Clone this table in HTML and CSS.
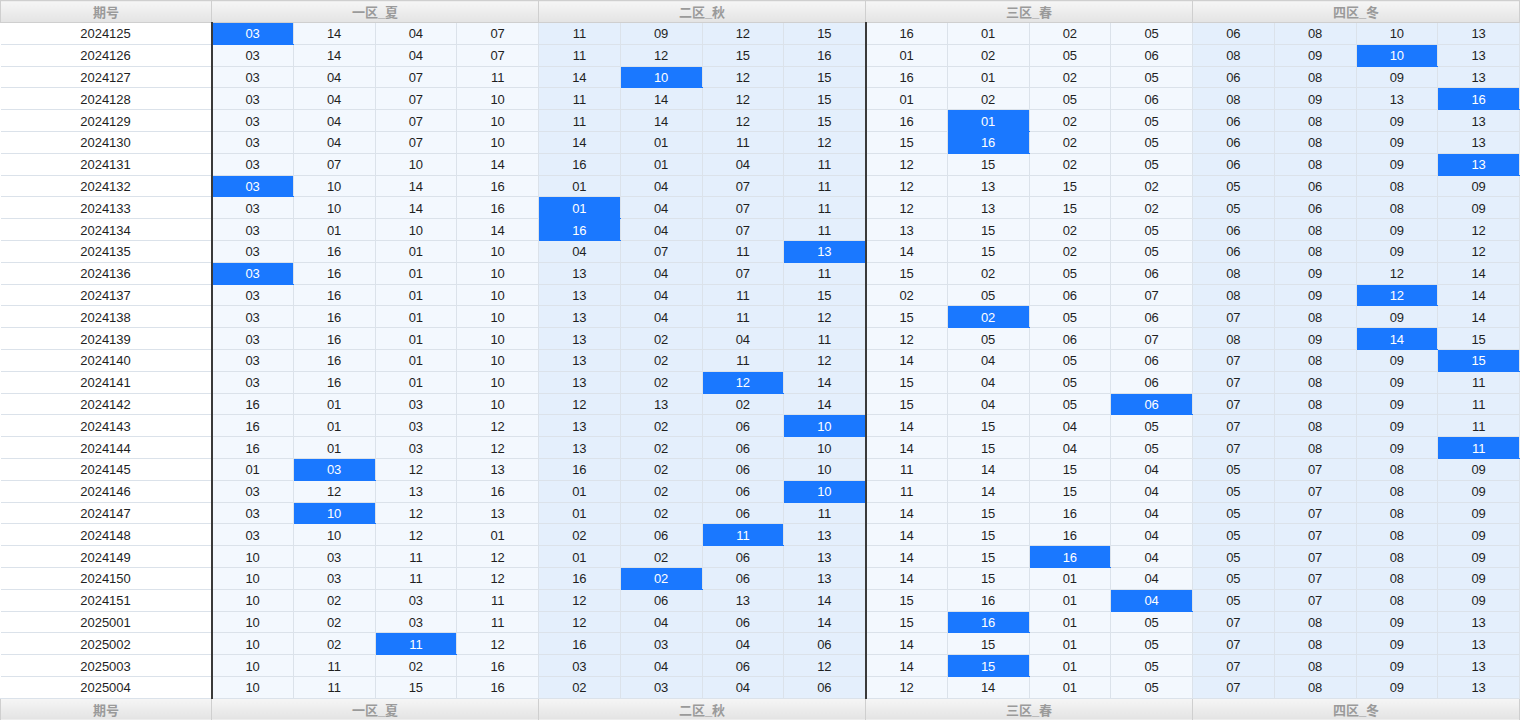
FILE: index.html
```html
<!DOCTYPE html>
<html lang="zh">
<head>
<meta charset="utf-8">
<title>分区走势</title>
<link rel="stylesheet" href="styles.css">
</head>
<body>
<table class="grid">
<colgroup class="cp"><col class="c-period"></colgroup>
<colgroup class="za"><col><col><col><col></colgroup>
<colgroup class="zb"><col><col><col><col></colgroup>
<colgroup class="za"><col><col><col><col></colgroup>
<colgroup class="zb"><col><col><col><col></colgroup>
<thead>
<tr><th>期号</th><th colspan="4">一区_夏</th><th colspan="4">二区_秋</th><th colspan="4">三区_春</th><th colspan="4">四区_冬</th></tr>
</thead>
<tbody>
<tr><td>2024125</td><td class="h">03</td><td>14</td><td>04</td><td>07</td><td>11</td><td>09</td><td>12</td><td>15</td><td>16</td><td>01</td><td>02</td><td>05</td><td>06</td><td>08</td><td>10</td><td>13</td></tr>
<tr><td>2024126</td><td>03</td><td>14</td><td>04</td><td>07</td><td>11</td><td>12</td><td>15</td><td>16</td><td>01</td><td>02</td><td>05</td><td>06</td><td>08</td><td>09</td><td class="h">10</td><td>13</td></tr>
<tr><td>2024127</td><td>03</td><td>04</td><td>07</td><td>11</td><td>14</td><td class="h">10</td><td>12</td><td>15</td><td>16</td><td>01</td><td>02</td><td>05</td><td>06</td><td>08</td><td>09</td><td>13</td></tr>
<tr><td>2024128</td><td>03</td><td>04</td><td>07</td><td>10</td><td>11</td><td>14</td><td>12</td><td>15</td><td>01</td><td>02</td><td>05</td><td>06</td><td>08</td><td>09</td><td>13</td><td class="h">16</td></tr>
<tr><td>2024129</td><td>03</td><td>04</td><td>07</td><td>10</td><td>11</td><td>14</td><td>12</td><td>15</td><td>16</td><td class="h">01</td><td>02</td><td>05</td><td>06</td><td>08</td><td>09</td><td>13</td></tr>
<tr><td>2024130</td><td>03</td><td>04</td><td>07</td><td>10</td><td>14</td><td>01</td><td>11</td><td>12</td><td>15</td><td class="h">16</td><td>02</td><td>05</td><td>06</td><td>08</td><td>09</td><td>13</td></tr>
<tr><td>2024131</td><td>03</td><td>07</td><td>10</td><td>14</td><td>16</td><td>01</td><td>04</td><td>11</td><td>12</td><td>15</td><td>02</td><td>05</td><td>06</td><td>08</td><td>09</td><td class="h">13</td></tr>
<tr><td>2024132</td><td class="h">03</td><td>10</td><td>14</td><td>16</td><td>01</td><td>04</td><td>07</td><td>11</td><td>12</td><td>13</td><td>15</td><td>02</td><td>05</td><td>06</td><td>08</td><td>09</td></tr>
<tr><td>2024133</td><td>03</td><td>10</td><td>14</td><td>16</td><td class="h">01</td><td>04</td><td>07</td><td>11</td><td>12</td><td>13</td><td>15</td><td>02</td><td>05</td><td>06</td><td>08</td><td>09</td></tr>
<tr><td>2024134</td><td>03</td><td>01</td><td>10</td><td>14</td><td class="h">16</td><td>04</td><td>07</td><td>11</td><td>13</td><td>15</td><td>02</td><td>05</td><td>06</td><td>08</td><td>09</td><td>12</td></tr>
<tr><td>2024135</td><td>03</td><td>16</td><td>01</td><td>10</td><td>04</td><td>07</td><td>11</td><td class="h">13</td><td>14</td><td>15</td><td>02</td><td>05</td><td>06</td><td>08</td><td>09</td><td>12</td></tr>
<tr><td>2024136</td><td class="h">03</td><td>16</td><td>01</td><td>10</td><td>13</td><td>04</td><td>07</td><td>11</td><td>15</td><td>02</td><td>05</td><td>06</td><td>08</td><td>09</td><td>12</td><td>14</td></tr>
<tr><td>2024137</td><td>03</td><td>16</td><td>01</td><td>10</td><td>13</td><td>04</td><td>11</td><td>15</td><td>02</td><td>05</td><td>06</td><td>07</td><td>08</td><td>09</td><td class="h">12</td><td>14</td></tr>
<tr><td>2024138</td><td>03</td><td>16</td><td>01</td><td>10</td><td>13</td><td>04</td><td>11</td><td>12</td><td>15</td><td class="h">02</td><td>05</td><td>06</td><td>07</td><td>08</td><td>09</td><td>14</td></tr>
<tr><td>2024139</td><td>03</td><td>16</td><td>01</td><td>10</td><td>13</td><td>02</td><td>04</td><td>11</td><td>12</td><td>05</td><td>06</td><td>07</td><td>08</td><td>09</td><td class="h">14</td><td>15</td></tr>
<tr><td>2024140</td><td>03</td><td>16</td><td>01</td><td>10</td><td>13</td><td>02</td><td>11</td><td>12</td><td>14</td><td>04</td><td>05</td><td>06</td><td>07</td><td>08</td><td>09</td><td class="h">15</td></tr>
<tr><td>2024141</td><td>03</td><td>16</td><td>01</td><td>10</td><td>13</td><td>02</td><td class="h">12</td><td>14</td><td>15</td><td>04</td><td>05</td><td>06</td><td>07</td><td>08</td><td>09</td><td>11</td></tr>
<tr><td>2024142</td><td>16</td><td>01</td><td>03</td><td>10</td><td>12</td><td>13</td><td>02</td><td>14</td><td>15</td><td>04</td><td>05</td><td class="h">06</td><td>07</td><td>08</td><td>09</td><td>11</td></tr>
<tr><td>2024143</td><td>16</td><td>01</td><td>03</td><td>12</td><td>13</td><td>02</td><td>06</td><td class="h">10</td><td>14</td><td>15</td><td>04</td><td>05</td><td>07</td><td>08</td><td>09</td><td>11</td></tr>
<tr><td>2024144</td><td>16</td><td>01</td><td>03</td><td>12</td><td>13</td><td>02</td><td>06</td><td>10</td><td>14</td><td>15</td><td>04</td><td>05</td><td>07</td><td>08</td><td>09</td><td class="h">11</td></tr>
<tr><td>2024145</td><td>01</td><td class="h">03</td><td>12</td><td>13</td><td>16</td><td>02</td><td>06</td><td>10</td><td>11</td><td>14</td><td>15</td><td>04</td><td>05</td><td>07</td><td>08</td><td>09</td></tr>
<tr><td>2024146</td><td>03</td><td>12</td><td>13</td><td>16</td><td>01</td><td>02</td><td>06</td><td class="h">10</td><td>11</td><td>14</td><td>15</td><td>04</td><td>05</td><td>07</td><td>08</td><td>09</td></tr>
<tr><td>2024147</td><td>03</td><td class="h">10</td><td>12</td><td>13</td><td>01</td><td>02</td><td>06</td><td>11</td><td>14</td><td>15</td><td>16</td><td>04</td><td>05</td><td>07</td><td>08</td><td>09</td></tr>
<tr><td>2024148</td><td>03</td><td>10</td><td>12</td><td>01</td><td>02</td><td>06</td><td class="h">11</td><td>13</td><td>14</td><td>15</td><td>16</td><td>04</td><td>05</td><td>07</td><td>08</td><td>09</td></tr>
<tr><td>2024149</td><td>10</td><td>03</td><td>11</td><td>12</td><td>01</td><td>02</td><td>06</td><td>13</td><td>14</td><td>15</td><td class="h">16</td><td>04</td><td>05</td><td>07</td><td>08</td><td>09</td></tr>
<tr><td>2024150</td><td>10</td><td>03</td><td>11</td><td>12</td><td>16</td><td class="h">02</td><td>06</td><td>13</td><td>14</td><td>15</td><td>01</td><td>04</td><td>05</td><td>07</td><td>08</td><td>09</td></tr>
<tr><td>2024151</td><td>10</td><td>02</td><td>03</td><td>11</td><td>12</td><td>06</td><td>13</td><td>14</td><td>15</td><td>16</td><td>01</td><td class="h">04</td><td>05</td><td>07</td><td>08</td><td>09</td></tr>
<tr><td>2025001</td><td>10</td><td>02</td><td>03</td><td>11</td><td>12</td><td>04</td><td>06</td><td>14</td><td>15</td><td class="h">16</td><td>01</td><td>05</td><td>07</td><td>08</td><td>09</td><td>13</td></tr>
<tr><td>2025002</td><td>10</td><td>02</td><td class="h">11</td><td>12</td><td>16</td><td>03</td><td>04</td><td>06</td><td>14</td><td>15</td><td>01</td><td>05</td><td>07</td><td>08</td><td>09</td><td>13</td></tr>
<tr><td>2025003</td><td>10</td><td>11</td><td>02</td><td>16</td><td>03</td><td>04</td><td>06</td><td>12</td><td>14</td><td class="h">15</td><td>01</td><td>05</td><td>07</td><td>08</td><td>09</td><td>13</td></tr>
<tr><td>2025004</td><td>10</td><td>11</td><td>15</td><td>16</td><td>02</td><td>03</td><td>04</td><td>06</td><td>12</td><td>14</td><td>01</td><td>05</td><td>07</td><td>08</td><td>09</td><td>13</td></tr>
</tbody>
<tfoot>
<tr><th>期号</th><th colspan="4">一区_夏</th><th colspan="4">二区_秋</th><th colspan="4">三区_春</th><th colspan="4">四区_冬</th></tr>
</tfoot>
</table>
</body>
</html>
```
FILE: styles.css
```css
html, body {
  margin: 0;
  padding: 0;
  background: #ffffff;
  overflow: hidden;
}

.grid {
  width: 1520px;
  table-layout: fixed;
  border-collapse: collapse;
  font-family: "Liberation Sans", Arial, "Noto Sans CJK SC", sans-serif;
  font-size: 13px;
  color: #1f1f1f;
}

.c-period {
  width: 211px;
}

.cp { background: #ffffff; }
.za { background: #f3f8fe; }
.zb { background: #e4effc; }

.grid th {
  height: 21px;
  padding: 0;
  font-family: "Liberation Sans", "Noto Sans CJK SC", sans-serif;
  font-size: 13px;
  font-weight: bold;
  color: #9a9a9a;
  text-align: center;
  background: linear-gradient(#f6f6f6, #e3e3e3);
  border: 1px solid #cfcfcf;
}

.grid td {
  height: 19.8px;
  padding: 1px 0 0;
  text-align: center;
  line-height: 19px;
  border: 1px solid #dbe2ea;
}

.grid tbody td:nth-child(2),
.grid tbody td:nth-child(10) {
  border-left: 2px solid #3a3a3a;
}

.grid tbody td:first-child {
  border-left: none;
}

.grid td.h {
  background: #1a78ff;
  color: #ffffff;
  border-color: #1a78ff #dbe2ea;
}

.grid tbody td.h:nth-child(2),
.grid tbody td.h:nth-child(10) {
  border-left-color: #3a3a3a;
}
```
